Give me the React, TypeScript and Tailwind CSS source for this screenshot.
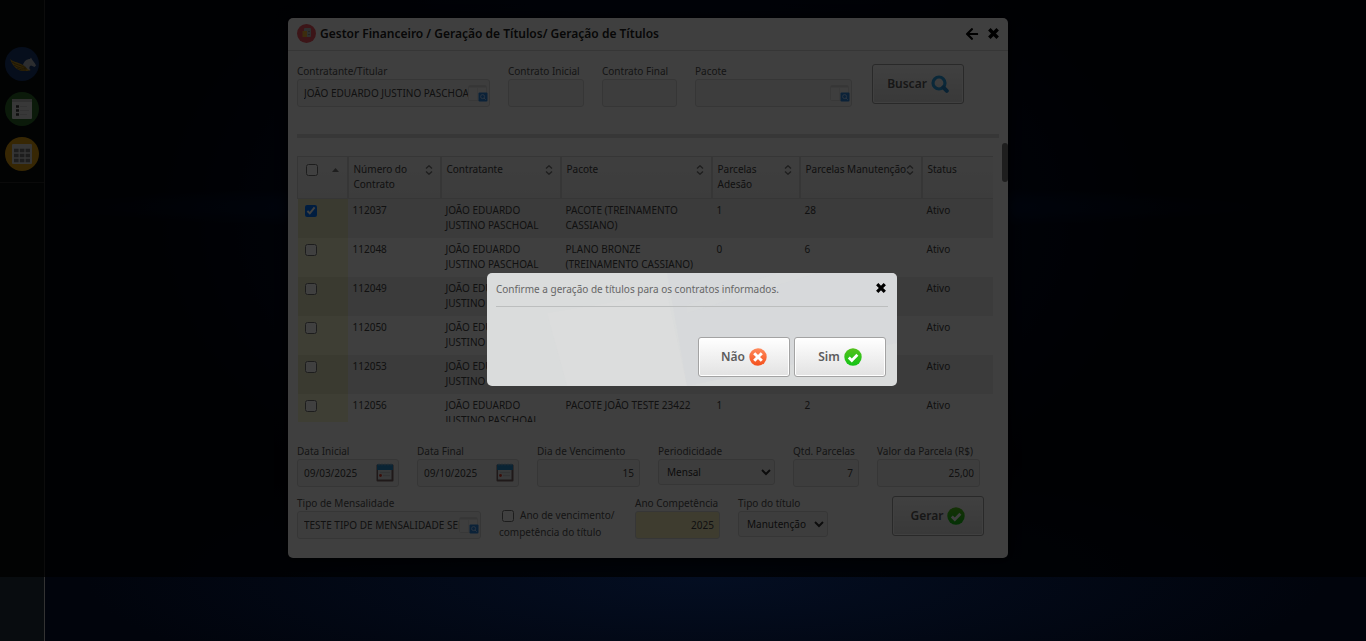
import { useState } from "react";
import type { ReactNode } from "react";
import { FaArrowLeft } from "react-icons/fa";

const PERSON = "JOÃO EDUARDO JUSTINO PASCHOAL";

const rows = [
  { id: "112037", pacote: "PACOTE (TREINAMENTO CASSIANO)", adesao: "1", manut: "28" },
  { id: "112048", pacote: "PLANO BRONZE (TREINAMENTO CASSIANO)", adesao: "0", manut: "6" },
  { id: "112049", pacote: "", adesao: "", manut: "" },
  { id: "112050", pacote: "", adesao: "", manut: "" },
  { id: "112053", pacote: "", adesao: "", manut: "" },
  { id: "112056", pacote: "PACOTE JOÃO TESTE 23422", adesao: "1", manut: "2" },
];

const columns = [
  { label: "Número do Contrato", sort: true },
  { label: "Contratante", sort: true },
  { label: "Pacote", sort: true },
  { label: "Parcelas Adesão", sort: true },
  { label: "Parcelas Manutenção", sort: true },
  { label: "Status", sort: false },
];

function CloseIcon({ className }: { className: string }) {
  return (
    <svg viewBox="0 0 10 10" className={className} aria-hidden="true">
      <path d="M1.2 1.2 8.8 8.8M8.8 1.2 1.2 8.8" stroke="currentColor" strokeWidth="3.2" />
    </svg>
  );
}

function SortIcon() {
  return (
    <svg viewBox="0 0 8 10" className="mt-[3px] h-[10px] w-[8px] shrink-0" aria-hidden="true">
      <path d="M1 3.600 4 0.800l3 2.800M1 6.400l3 2.800 3-2.800" fill="none" stroke="#777" strokeWidth="1.400" />
    </svg>
  );
}

function LookupIcon() {
  return (
    <svg viewBox="0 0 20 18" className="mr-px h-[18px] w-[20px]" aria-hidden="true">
      <rect x="0.5" y="1.5" width="18" height="15" rx="1" fill="#f8f8f8" stroke="#dedede" />
      <path d="M1 1.5h17v2H1z" fill="#d8d8d8" />
      <path d="M9.5 4v12" stroke="#e6e6e6" />
      <rect x="10.500" y="8.500" width="9" height="9" rx="1" fill="#2f86e0" />
      <circle cx="14.600" cy="12.600" r="2" fill="none" stroke="#a8d0ff" strokeWidth="1" />
      <path d="m16 14 1.700 1.700" stroke="#a8d0ff" />
    </svg>
  );
}

function CalendarIcon() {
  return (
    <svg viewBox="0 0 18 19" className="mr-1 mb-[2px] h-[19px] w-[18px]" aria-hidden="true">
      <rect x="0.500" y="1.500" width="17" height="17" rx="1" fill="#7c6664" />
      <rect x="2" y="6" width="13.500" height="10.500" fill="#e2e8ea" />
      <path d="M1 1.500h16v5.500H1z" fill="#2a8fd0" />
      <path d="M3 0.500v2M6 0.500v2M9 0.500v2M12 0.500v2M15 0.500v2" stroke="#7ab8dc" strokeWidth="1" />
      <path d="M4 9.500h10M7 12.500h7" stroke="#c6ccd0" strokeWidth="1.500" />
      <circle cx="4.500" cy="12.500" r="1.400" fill="#e03a2a" />
    </svg>
  );
}

function CheckIcon() {
  return (
    <svg viewBox="0 0 18 18" className="h-[18px] w-[18px]" aria-hidden="true">
      <defs>
        <linearGradient id="ok" x1="0" y1="0" x2="0" y2="1">
          <stop offset="0" stopColor="#54c11c" />
          <stop offset="1" stopColor="#12c416" />
        </linearGradient>
      </defs>
      <circle cx="9" cy="9" r="8.700" fill="url(#ok)" />
      <path d="m4.800 9.400 3 3 5.600-5.600" fill="none" stroke="#fff" strokeWidth="2.800" />
    </svg>
  );
}

function CancelIcon() {
  return (
    <svg viewBox="0 0 18 18" className="h-[18px] w-[18px]" aria-hidden="true">
      <defs>
        <linearGradient id="no" x1="0" y1="0" x2="0" y2="1">
          <stop offset="0" stopColor="#ff8a5c" />
          <stop offset="1" stopColor="#f4501c" />
        </linearGradient>
      </defs>
      <circle cx="9" cy="9" r="8.700" fill="url(#no)" />
      <path d="m5.200 5.200 7.600 7.600m0-7.600-7.600 7.600" stroke="#fff" strokeWidth="3" />
    </svg>
  );
}

function SearchIcon() {
  return (
    <svg viewBox="0 0 18 18" className="h-[18px] w-[18px]" aria-hidden="true">
      <circle cx="8" cy="8" r="6" fill="none" stroke="#2aa0e4" strokeWidth="3.200" />
      <path d="m12.400 12.400 3.400 3.400" stroke="#2486cc" strokeWidth="4" strokeLinecap="round" />
    </svg>
  );
}

function BigButton({ children, className = "" }: { children: ReactNode; className?: string }) {
  return (
    <button
      type="button"
      className={`flex h-[40px] w-[92px] items-center justify-center gap-1 rounded-[3px] border border-[#a3a3a3] bg-gradient-to-b from-white to-[#e2e2e2] pb-px text-[12px] font-semibold text-[#5c5c5c] shadow-[inset_0_0_0_1px_#fff] ${className}`}
    >
      {children}
    </button>
  );
}

type FieldProps = {
  id: string;
  label: string;
  width: string;
  value?: string;
  align?: string;
  tone?: string;
  icon?: ReactNode;
};

function Field({ id, label, width, value = "", align = "", tone = "bg-[#f4f4f4]", icon }: FieldProps) {
  return (
    <div className={`shrink-0 ${width}`}>
      <label htmlFor={id} className="block h-4 whitespace-nowrap leading-4">
        {label}
      </label>
      <div className={`flex h-[28px] items-center rounded-[3px] border border-[#d6d6d6] ${tone}`}>
        <input id={id} defaultValue={value} className={`h-full min-w-0 flex-1 bg-transparent pl-[6px] text-[#444] outline-none ${icon ? "pr-0" : "pr-[5px]"} ${align}`} />
        {icon}
      </div>
    </div>
  );
}

function SelectField({ id, label, width, option }: { id: string; label: string; width: string; option: string }) {
  return (
    <div className={`shrink-0 ${width}`}>
      <label htmlFor={id} className="block h-4 whitespace-nowrap leading-4">
        {label}
      </label>
      <select id={id} className="block h-[26px] w-full rounded-[3px] border border-[#d6d6d6] bg-[#f4f4f4] pl-1 text-[#333]">
        <option>{option}</option>
      </select>
    </div>
  );
}

function Sidebar() {
  return (
    <nav className="w-[45px] shrink-0 border-r border-[#333] bg-[#080c0f]">
      <div className="flex flex-col items-center gap-[11px] border-b border-[#2a2a2a] pt-[47px] pb-[11px]">
        <a href="#inicio" aria-label="Início">
          <svg viewBox="0 0 34 34" className="h-[34px] w-[34px]">
            <circle cx="17" cy="17" r="17" fill="#183870" />
            <path d="M5 12c3 3 8 3 13 6 3 2 5 4 8 5-2 1-5 1-8 1-5 0-10-4-13-12Z" fill="#c08f1c" />
            <path d="M7 15c4 3 9 3 14 6M9 18c4 3 8 3 13 4M12 21c3 2 6 2 9 2" stroke="#7a5c10" fill="none" />
            <path d="M18 18c1-4 4-6 7-6l1-1.500 1 2 3 4 1 2-1.500 1.500-3.500-1.500c-2 1-2 2-1 5-3-1-4-4-7-5.500Z" fill="#aeb3bc" />
          </svg>
        </a>
        <a href="#lista" aria-label="Lista">
          <svg viewBox="0 0 34 34" className="h-[34px] w-[34px]">
            <circle cx="17" cy="17" r="17" fill="#2c6a28" />
            <rect x="7" y="7" width="20" height="20" rx="1" fill="#dedede" />
            <path d="M7 7h20v3H7z" fill="#bcbcbc" />
            <path d="M11 14.500h3M11 18.500h3M11 22.500h3" stroke="#3a3a3a" strokeWidth="2.400" />
            <path d="M15 14.500h7M15 18.500h9M15 22.500h7" stroke="#c6c6c6" />
          </svg>
        </a>
        <a href="#agenda" aria-label="Agenda">
          <svg viewBox="0 0 34 34" className="h-[34px] w-[34px]">
            <circle cx="17" cy="17" r="17" fill="#dc9c10" />
            <rect x="7" y="7" width="20" height="20" rx="1" fill="#d6d6d6" />
            <path d="M9 13.500h16M9 18.500h16M9 23.500h16" stroke="#747474" strokeWidth="3.400" strokeDasharray="4.600 1.200" />
          </svg>
        </a>
      </div>
    </nav>
  );
}

function ContractsTable() {
  return (
    <div className="mt-[18px] mr-[6px] h-[266px] overflow-hidden">
      <table className="w-full table-fixed border-collapse text-left">
        <colgroup>
          <col className="w-[50px]" />
          <col className="w-[93px]" />
          <col className="w-[120px]" />
          <col className="w-[151px]" />
          <col className="w-[88px]" />
          <col className="w-[122px]" />
          <col className="w-[72px]" />
        </colgroup>
        <thead>
          <tr className="h-[42px] bg-gradient-to-b from-[#f8f8f8] to-[#efefef] align-top text-[#444]">
            <th className="border border-[#d8d8d8] pt-[7px] pr-2 pl-[8px]">
              <span className="flex items-center justify-between">
                <input type="checkbox" aria-label="Selecionar todos" className="block h-[12px] w-[12px]" />
                <svg viewBox="0 0 7 4" className="h-[4px] w-[7px]" aria-hidden="true">
                  <path d="M3.500 0 7 4H0z" fill="#777" />
                </svg>
              </span>
            </th>
            {columns.map((c) => (
              <th key={c.label} className="border border-l-2 border-[#d8d8d8] pt-[5px] pr-[7px] pl-[5px] font-normal leading-[15px]">
                <span className="flex justify-between">
                  <span className={c.label === "Parcelas Manutenção" ? "whitespace-nowrap" : ""}>{c.label}</span>
                  {c.sort && <SortIcon />}
                </span>
              </th>
            ))}
          </tr>
        </thead>
        <tbody>
          {rows.map((r, i) => (
            <tr key={r.id} className="h-[39px] align-top leading-[15px] text-[#444] odd:bg-[#e9e9e9] even:bg-[#fbfbfb]">
              <td className={`pt-[6px] pl-[7px] ${i % 2 ? "bg-[#f8f6d0]" : "bg-[#e8e6c0]"}`}>
                <input type="checkbox" aria-label={`Contrato ${r.id}`} defaultChecked={i === 0} className="block h-[12px] w-[12px]" />
              </td>
              <td className="py-1 pl-[5px]">{r.id}</td>
              <td className="py-1 pl-[5px]">{PERSON}</td>
              <td className="py-1 pl-[5px]">{r.pacote}</td>
              <td className="py-1 pl-[5px]">{r.adesao}</td>
              <td className="py-1 pl-[5px]">{r.manut}</td>
              <td className="py-1 pl-[5px]">Ativo</td>
            </tr>
          ))}
        </tbody>
      </table>
    </div>
  );
}

function Panel() {
  return (
    <section className="relative w-[720px] rounded-[5px] bg-[#fbfbfb] text-[#555] shadow-[0_0_12px_rgba(0,0,0,0.9)]">
      <header className="flex h-[33px] items-center border-b border-[#d8d8d8] px-[9px] pb-px text-[#222]">
        <svg viewBox="0 0 19 19" className="mr-1 h-[19px] w-[19px]" aria-hidden="true">
          <circle cx="9.500" cy="9.500" r="9.500" fill="#ee5560" />
          <rect x="7" y="4" width="7" height="9" rx="1" fill="#b8c0c0" />
          <path d="M5.500 7h4.500v6H5.500z" fill="#f3b036" />
          <path d="M11 7.500h2M11 10.500h2" stroke="#8d8d8d" />
        </svg>
        <h1 className="text-[12px] font-semibold">Gestor Financeiro / Geração de Títulos/ Geração de Títulos</h1>
        <button type="button" aria-label="Voltar" className="ml-auto text-black">
          <FaArrowLeft size={14} />
        </button>
        <button type="button" aria-label="Fechar" className="ml-[9px] text-black">
          <CloseIcon className="h-[11px] w-[11px]" />
        </button>
      </header>

      <div className="px-[9px] pt-[12px] pb-[17px]">
        <div className="flex gap-[18px]">
          <Field id="titular" label="Contratante/Titular" width="w-[193px]" value={PERSON} icon={<LookupIcon />} />
          <Field id="cini" label="Contrato Inicial" width="w-[76px]" />
          <Field id="cfim" label="Contrato Final" width="w-[75px]" />
          <Field id="pacote" label="Pacote" width="w-[157px]" icon={<LookupIcon />} />
          <BigButton className="mt-px ml-[2px]">
            Buscar <SearchIcon />
          </BigButton>
        </div>
        <hr className="mt-[27px] h-1 border-0 bg-[#dcdcdc]" />
        <ContractsTable />

        <div className="mt-[21px] flex gap-[18px]">
          <Field id="dini" label="Data Inicial" width="w-[102px]" value="09/03/2025" icon={<CalendarIcon />} />
          <Field id="dfim" label="Data Final" width="w-[102px]" value="09/10/2025" icon={<CalendarIcon />} />
          <Field id="dia" label="Dia de Vencimento" width="w-[103px]" value="15" align="text-right" />
          <SelectField id="per" label="Periodicidade" width="w-[117px]" option="Mensal" />
          <Field id="qtd" label="Qtd. Parcelas" width="w-[66px]" value="7" align="text-right" />
          <Field id="valor" label="Valor da Parcela (R$)" width="w-[103px]" value="25,00" align="text-right" />
        </div>
        <div className="mt-2 flex gap-[18px]">
          <Field id="tipo" label="Tipo de Mensalidade" width="w-[184px]" value="TESTE TIPO DE MENSALIDADE SEM" icon={<LookupIcon />} />
          <label className="w-[118px] shrink-0 pt-3 leading-[17px]">
            <input type="checkbox" className="mr-[6px] ml-[3px] h-[12px] w-[12px] align-[-3px]" />
            Ano de vencimento/ competência do título
          </label>
          <Field id="ano" label="Ano Competência" width="w-[85px]" value="2025" align="text-right" tone="bg-[#f6efbc]" />
          <SelectField id="titulo" label="Tipo do título" width="w-[90px]" option="Manutenção" />
          <BigButton className="mt-px mr-[15px] ml-auto">
            Gerar <CheckIcon />
          </BigButton>
        </div>
      </div>
      <div className="absolute top-[125px] right-0 h-[39px] w-[6px] rounded-full bg-[#777]" />
    </section>
  );
}

function ConfirmDialog({ onClose }: { onClose: () => void }) {
  return (
    <div role="dialog" aria-label="Confirmação" className="relative w-[410px] overflow-hidden rounded-[5px] bg-[#dadcdc] px-[9px] pb-[9px] text-[#666]">
      <svg viewBox="0 0 410 113" preserveAspectRatio="none" className="absolute inset-0 h-full w-full" aria-hidden="true">
        <path d="M180 0h230v70L200 113Z" fill="#d5d7da" opacity="0.600" />
        <path d="M60 40 180 20l20 93H80Z" fill="#dddddd" opacity="0.500" />
        <path d="M200 32 290 0h40l-130 40Z" fill="#dadcdc" opacity="0.500" />
      </svg>
      <div className="relative flex h-[34px] items-center justify-between border-b border-[#bcbebe]">
        <p>Confirme a geração de títulos para os contratos informados.</p>
        <button type="button" aria-label="Fechar" onClick={onClose} className="mr-[2px] mb-[3px] text-black">
          <CloseIcon className="h-[10px] w-[10px]" />
        </button>
      </div>
      <div className="relative mt-[30px] mr-[2px] flex justify-end gap-1">
        <BigButton>
          Não <CancelIcon />
        </BigButton>
        <BigButton>
          Sim <CheckIcon />
        </BigButton>
      </div>
    </div>
  );
}

export default function App() {
  const [open, setOpen] = useState(true);
  return (
    <div className="relative flex min-h-screen bg-[#01040c] font-['Noto_Sans',sans-serif] text-[10px]">
      <Sidebar />
      <main className="flex flex-1 items-start justify-center bg-[radial-gradient(ellipse_640px_22px_at_46%_207px,#00308866,transparent),radial-gradient(ellipse_520px_330px_at_46%_220px,#001444,transparent),radial-gradient(ellipse_620px_130px_at_50%_577px,#040e22,transparent)] pt-[18px] pr-[115px]">
        <Panel />
      </main>
      {open && (
        <div className="absolute inset-x-0 top-0 flex h-[90vh] items-start justify-center bg-black/75 pt-[273px] pl-[18px]">
          <ConfirmDialog onClose={() => setOpen(false)} />
        </div>
      )}
    </div>
  );
}
